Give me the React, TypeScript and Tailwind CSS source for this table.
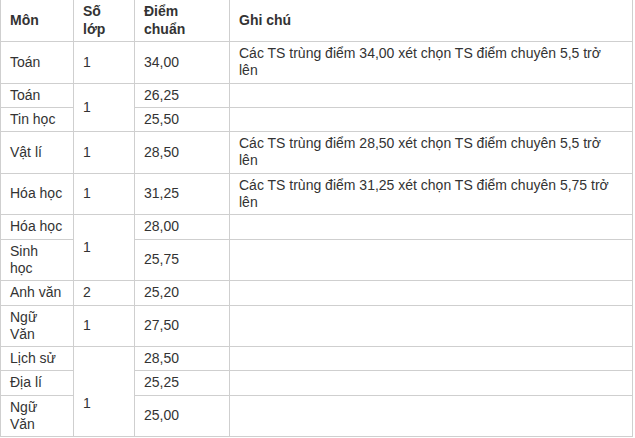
const note = (v: string, c: string) =>
  `Các TS trùng điểm ${v} xét chọn TS điểm chuyên ${c} trở lên`;

type Row = {
  mon: string;
  lop?: { text: string; span?: number; open?: "bottom" | "top" };
  diem: string;
  ghichu?: string;
};

const rows: Row[] = [
  { mon: "Toán", lop: { text: "1" }, diem: "34,00", ghichu: note("34,00", "5,5") },
  { mon: "Toán", lop: { text: "1", span: 2 }, diem: "26,25" },
  { mon: "Tin học", diem: "25,50" },
  { mon: "Vật lí", lop: { text: "1" }, diem: "28,50", ghichu: note("28,50", "5,5") },
  { mon: "Hóa học", lop: { text: "1" }, diem: "31,25", ghichu: note("31,25", "5,75") },
  { mon: "Hóa học", lop: { text: "1", span: 2 }, diem: "28,00" },
  { mon: "Sinh học", diem: "25,75" },
  { mon: "Anh văn", lop: { text: "2" }, diem: "25,20" },
  { mon: "Ngữ Văn", lop: { text: "1" }, diem: "27,50" },
  { mon: "Lịch sử", lop: { text: "", open: "bottom" }, diem: "28,50" },
  { mon: "Địa lí", lop: { text: "1", span: 2, open: "top" }, diem: "25,25" },
  { mon: "Ngữ Văn", diem: "25,00" },
];

const cell = "border border-[#cfcfcf] px-[9px] py-[3px] align-middle text-left";

export default function App() {
  return (
    <div className="w-[635px] h-[438px] overflow-hidden bg-white">
      <table
        className="-mt-px w-[633px] table-fixed border-collapse text-[14px] leading-[17.3px] text-[#333]"
        style={{ fontFamily: '"Liberation Sans", Arial, sans-serif' }}
      >
        <colgroup>
          <col className="w-[73px]" />
          <col className="w-[61px]" />
          <col className="w-[95px]" />
          <col />
        </colgroup>
        <thead>
          <tr className="h-[42px]">
            <th className={`${cell} font-bold`}>Môn</th>
            <th className={`${cell} font-bold`}>Số lớp</th>
            <th className={`${cell} font-bold`}>Điểm chuẩn</th>
            <th className={`${cell} font-bold`}>Ghi chú</th>
          </tr>
        </thead>
        <tbody>
          {rows.map((r, i) => (
            <tr key={i}>
              <td className={cell}>{r.mon}</td>
              {r.lop && (
                <td
                  rowSpan={r.lop.span}
                  className={`${cell} ${r.lop.open === "bottom" ? "border-b-0" : ""} ${
                    r.lop.open === "top" ? "border-t-0" : ""
                  }`}
                >
                  {r.lop.text}
                </td>
              )}
              <td className={cell}>{r.diem}</td>
              <td className={cell}>{r.ghichu}</td>
            </tr>
          ))}
        </tbody>
      </table>
    </div>
  );
}
